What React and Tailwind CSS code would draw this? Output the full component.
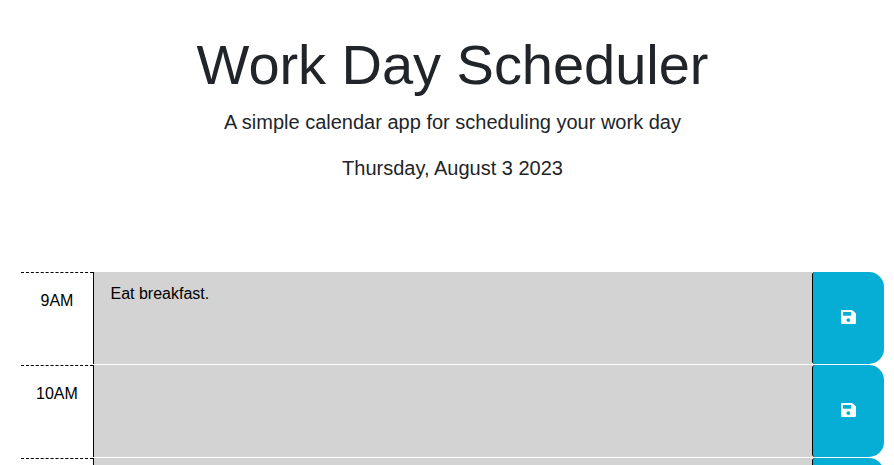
const blocks = [
  { id: 9, hour: "9AM", text: "Eat breakfast." },
  { id: 10, hour: "10AM", text: "" },
  { id: 11, hour: "", text: "" },
];

function SaveIcon() {
  return (
    <svg width="15" height="14" viewBox="0 0 15 14" fill="currentColor" aria-hidden="true">
      <path
        fillRule="evenodd"
        d="M1.3 0H10.8Q11.4 0 11.8 .4L14.5 2.9Q15 3.3 15 3.9V12.7Q15 14 13.7 14H1.3Q0 14 0 12.7V1.3Q0 0 1.3 0ZM2.4 2Q2 2 2 2.4V5.3Q2 5.7 2.4 5.7H9.8Q10.2 5.7 10.2 5.3V2.4Q10.2 2 9.8 2ZM7.3 8.2A1.9 1.9 0 1 0 7.3 12A1.9 1.9 0 1 0 7.3 8.2Z"
      />
    </svg>
  );
}

function TimeBlock({ hour, text }) {
  return (
    <div className="mb-px flex h-[92px] w-full">
      <div className="w-1/12 border-t border-dashed border-black pt-4 text-center text-black">
        {hour}
      </div>
      <div className="w-10/12 border-l border-black bg-[#d3d3d3] pt-[10px] pl-[16.6px] text-black">{text}</div>
      <button aria-label="Save" className="flex w-1/12 items-start rounded-l-[3px] rounded-r-[15px] border-l border-black bg-[#06aed5] pt-[38px] pl-[28px] text-white">
        <SaveIcon />
      </button>
    </div>
  );
}

export default function App() {
  return (
    <div className="h-[465px] overflow-hidden bg-white font-['Liberation_Sans',Arial,sans-serif] text-base text-[#212529]">
      <header className="flex h-[272px] flex-col items-center pt-[31px] pl-[11px]">
        <h1 className="text-[56px] leading-[67px] tracking-[-0.04px]">Work Day Scheduler</h1>
        <p className="mt-[9px] text-xl leading-[30px]">A simple calendar app for scheduling your work day</p>
        <p className="mt-4 text-xl leading-[30px]">Thursday, August 3 2023</p>
      </header>
      <main className="ml-[21px] w-[863px]">
        {blocks.map((block) => (
          <TimeBlock key={block.id} hour={block.hour} text={block.text} />
        ))}
      </main>
    </div>
  );
}
